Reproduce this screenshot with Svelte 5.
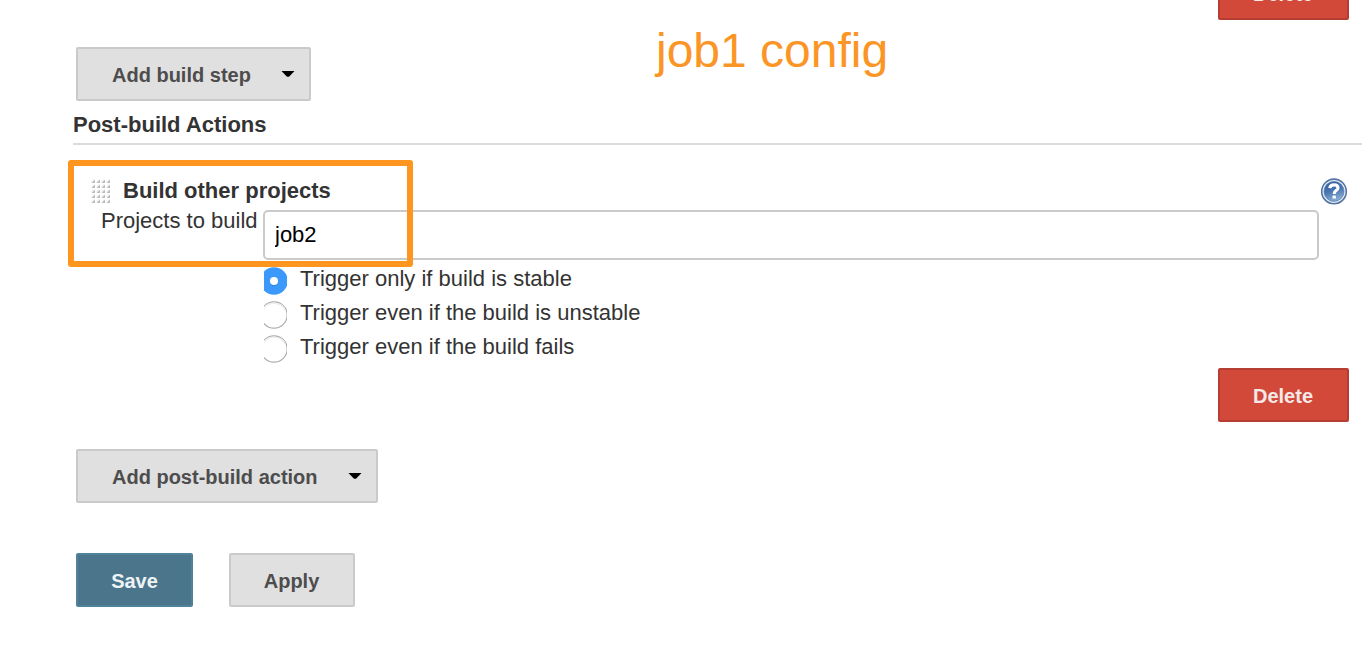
<script>
  const triggers = [
    'Trigger only if build is stable',
    'Trigger even if the build is unstable',
    'Trigger even if the build fails'
  ];
  let selected = $state(0);
  let projects = $state('job2');
  const gripRows = [0, 1, 2, 3, 4];
  const gripCols = [0, 1, 2, 3];
</script>

{#snippet caret()}
  <svg class="caret" width="14" height="8" viewBox="0 0 14 8"><path d="M.5 1h13L8.5 6.2Q7 7.5 5.5 6.2Z" fill="#000" /></svg>
{/snippet}

<main>
  <div class="right-row first"><button class="danger">Delete</button></div>
  <div class="step-row"><button class="menu step">Add build step {@render caret()}</button></div>
  <h2>Post-build Actions</h2>

  <section>
    <header>
      <svg class="grip" width="20" height="25" viewBox="0 0 20 25">
        {#each gripRows as r}
          {#each gripCols as c}
            <path d="M{c * 5 + 0.5} {r * 5 + 4}h3.5v-3.5z" fill="#b9b9b9" />
            <path d="M{c * 5 + 0.5} {r * 5 + 4}v-2l2-1.5h1.5z" fill="#ececec" />
          {/each}
        {/each}
      </svg>
      <h3>Build other projects</h3>
      <svg class="help" width="28" height="28" viewBox="0 0 28 28">
        <defs>
          <linearGradient id="helpFill" x1="0" y1="0" x2="0.3" y2="1">
            <stop offset="0" stop-color="#315b9c" />
            <stop offset="0.55" stop-color="#4a75b1" />
            <stop offset="1" stop-color="#86abd5" />
          </linearGradient>
        </defs>
        <circle cx="14" cy="14.4" r="12.3" fill="#e6edf6" stroke="#5474a2" stroke-width="1.6" />
        <circle cx="14" cy="14.4" r="10" fill="url(#helpFill)" stroke="#5577a8" stroke-width=".7" />
        <path d="M9.8 11.2Q10.1 7.9 14 7.9Q18 7.9 18 10.9Q18 12.5 16 13.7Q14.2 14.8 14.2 17" fill="none" stroke="#fff" stroke-width="3.1" />
        <rect x="12.5" y="18.4" width="3.4" height="3.2" rx=".6" fill="#fff" />
      </svg>
    </header>

    <div class="field">
      <label for="projects">Projects to build</label>
      <input id="projects" type="text" bind:value={projects} spellcheck="false" />
    </div>

    <div class="options" role="radiogroup">
      {#each triggers as label, i}
        <button class="option" role="radio" aria-checked={selected === i} onclick={() => (selected = i)}>
          <svg width="23" height="28" viewBox="0 0 23 28">
            {#if selected === i}
              <circle cx="10" cy="14" r="13.8" fill="#3b99fc" />
              <circle cx="10" cy="14.6" r="4.4" fill="#2a83e4" />
              <circle cx="10" cy="14" r="4.1" fill="#fff" />
            {:else}
              <circle cx="10" cy="14" r="13.2" fill="#fff" stroke="#ababab" stroke-width="1.2" />
              <path d="M-1 9Q2 2.3 10 2.3T21 9" fill="none" stroke="#eee" stroke-width="1.5" />
            {/if}
          </svg>
          <span>{label}</span>
        </button>
      {/each}
    </div>
    <div class="highlight"></div>
  </section>

  <div class="right-row"><button class="danger">Delete</button></div>
  <div class="post-row"><button class="menu post">Add post-build action {@render caret()}</button></div>
  <footer>
    <button class="save">Save</button>
    <button class="apply">Apply</button>
  </footer>
  <div class="title">job1 config</div>
</main>

<style>
  :global(body) { background: #fff; overflow: hidden; }
  main {
    position: relative;
    box-sizing: border-box;
    width: 1362px;
    height: 662px;
    overflow: hidden;
    font-family: "Liberation Sans", Arial, sans-serif;
    font-size: 22px;
    color: #333;
    background: #fff;
  }
  button {
    box-sizing: border-box;
    height: 54px;
    margin: 0;
    padding: 2px 0 0;
    font: bold 20px "Liberation Sans", Arial, sans-serif;
    color: #4d4d4d;
    background: #e0e0e0;
    border: 2px solid #cacaca;
    border-radius: 2px;
  }
  .right-row { display: flex; justify-content: flex-end; padding-right: 13px; }
  .first { margin-top: -34px; }
  .danger { width: 131px; padding-right: 1px; color: #f5e9e8; background: #d24939; border-color: #b63d31; }
  .step-row { display: flex; padding: 27px 0 0 76px; }
  .menu { display: flex; align-items: center; justify-content: space-between; padding: 2px 14px 0 34px; }
  .step { width: 235px; }
  .post { width: 302px; }
  .caret { margin-top: -3px; }
  h2 {
    box-sizing: border-box;
    height: 44px;
    margin: 0 0 0 73px;
    padding-top: 10px;
    font-size: 22px;
    line-height: 28px;
    border-bottom: 2px solid #dcdcdc;
  }
  section { position: relative; height: 223px; }
  header { display: flex; height: 65px; box-sizing: border-box; padding: 32px 14px 0 91px; }
  .grip { margin-top: 2px; }
  h3 { flex: 1; margin: 0 0 0 12px; font-size: 22px; line-height: 28px; }
  .help { flex: none; }
  .field { display: flex; padding: 0 43px 0 101px; }
  label { width: 162px; line-height: 22px; white-space: nowrap; }
  input {
    flex: 1;
    min-width: 0;
    box-sizing: border-box;
    height: 50px;
    margin: 0;
    padding: 0 10px;
    font: 22px "Liberation Sans", Arial, sans-serif;
    color: #000;
    background: #fff;
    border: 2px solid #cacaca;
    border-radius: 5px;
    outline: none;
  }
  .options { display: flex; flex-direction: column; padding: 4px 0 0 264px; }
  .option {
    display: flex;
    gap: 13px;
    height: 34px;
    padding: 0;
    font-weight: normal;
    font-size: 22px;
    line-height: 30px;
    color: #333;
    background: none;
    border: 0;
    align-items: flex-start;
  }
  .option svg { margin-top: 3px; flex: none; }
  .highlight {
    position: absolute;
    left: 68px;
    top: 15px;
    width: 345px;
    height: 107px;
    box-sizing: border-box;
    border: 6px solid #fd951f;
    border-radius: 3px;
    pointer-events: none;
  }
  .post-row { display: flex; padding: 27px 0 0 76px; }
  footer { display: flex; gap: 36px; padding: 50px 0 0 76px; }
  .save { width: 117px; color: #edf3f6; background: #4b758b; border-color: #50829c; }
  .apply { width: 126px; padding-right: 1px; }
  .title {
    position: absolute;
    left: 656px;
    top: 23px;
    font-size: 48px;
    line-height: 55px;
    color: #fb9626;
    white-space: nowrap;
  }
</style>
